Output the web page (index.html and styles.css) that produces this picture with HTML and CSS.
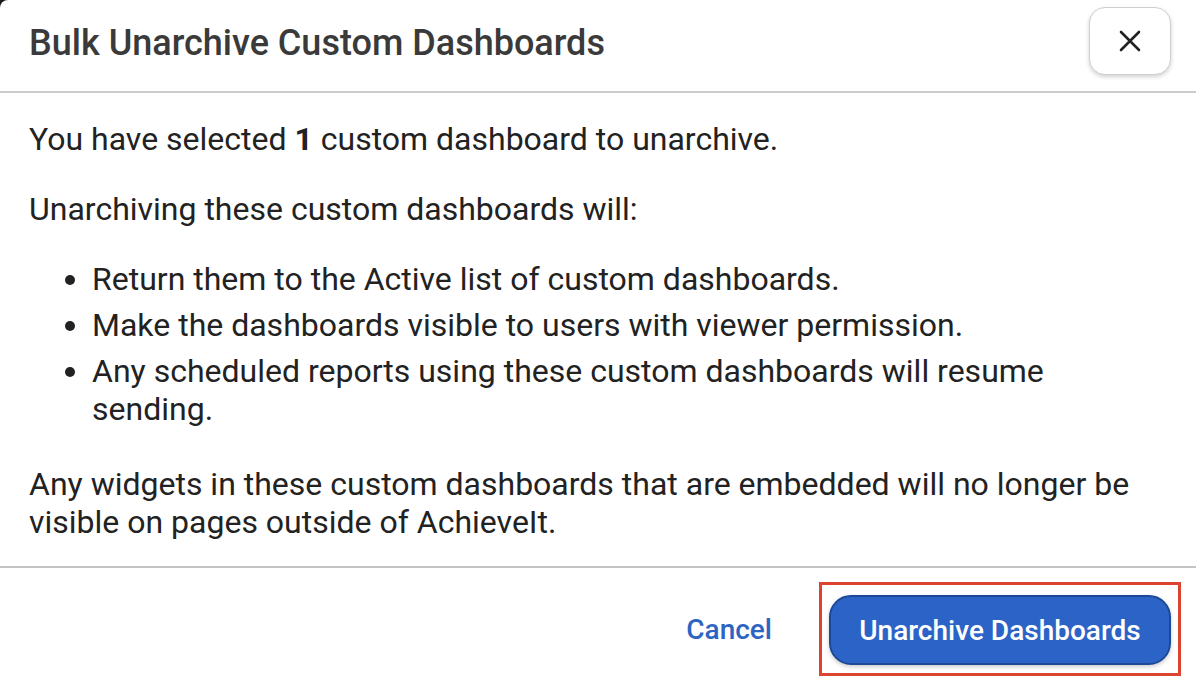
FILE: index.html
```html
<!DOCTYPE html>
<html lang="en">
<head>
<meta charset="utf-8">
<title>Bulk Unarchive Custom Dashboards</title>
<link rel="stylesheet" href="styles.css">
</head>
<body>
<div class="dialog">
  <header class="dialog-header">
    <h1 class="dialog-title">Bulk Unarchive Custom Dashboards</h1>
    <button class="close-btn" aria-label="Close">
      <svg width="22" height="22" viewBox="0 0 22 22" aria-hidden="true">
        <path d="M2 2 L20 20 M20 2 L2 20" stroke="#222" stroke-width="2.6" stroke-linecap="round" fill="none"/>
      </svg>
    </button>
  </header>
  <section class="dialog-body">
    <p class="para">You have selected <strong>1</strong> custom dashboard to unarchive.</p>
    <p class="para">Unarchiving these custom dashboards will:</p>
    <ul class="effects">
      <li>Return them to the Active list of custom dashboards.</li>
      <li>Make the dashboards visible to users with viewer permission.</li>
      <li>Any scheduled reports using these custom dashboards will resume sending.</li>
    </ul>
    <p class="para last">Any widgets in these custom dashboards that are embedded will no longer be visible on pages outside of AchieveIt.</p>
  </section>
  <footer class="dialog-footer">
    <button class="cancel-btn">Cancel</button>
    <div class="highlight">
      <button class="primary-btn">Unarchive Dashboards</button>
    </div>
  </footer>
</div>
</body>
</html>
```
FILE: styles.css
```css
html, body {
  margin: 0;
  padding: 0;
}
body {
  background: #1a1a1a;
  width: 1196px;
  height: 682px;
  overflow: hidden;
  font-family: Roboto, "Liberation Sans", Arial, sans-serif;
  color: #222;
}
.dialog {
  background: #fff;
  border-top-left-radius: 8px;
  width: 1196px;
  height: 682px;
}
.dialog-header {
  height: 91px;
  display: flex;
  align-items: center;
  justify-content: space-between;
  padding: 0 25px 0 29px;
  border-bottom: 2px solid #cbcbcb;
  box-sizing: content-box;
}
.dialog-title {
  margin: 0;
  font-size: 36px;
  font-weight: 500;
  color: #3a3a3a;
  padding-bottom: 6px;
}
.close-btn {
  width: 82px;
  height: 68px;
  border: 1.5px solid #cfcfcf;
  border-radius: 16px;
  background: #fff;
  box-shadow: 0 2px 4px rgba(0,0,0,0.18);
  display: flex;
  align-items: center;
  justify-content: center;
  padding: 0;
  margin-bottom: 10px;
}
.dialog-body {
  padding: 27px 29px 25px 29px;
  border-bottom: 2px solid #c4c4c4;
  font-size: 32px;
  line-height: 38px;
}
.para {
  margin: 0 0 32px 0;
}
.para.last {
  margin-bottom: 0;
}
.para strong {
  font-weight: 700;
}
.effects {
  margin: 0 0 37px 0;
  padding-left: 63px;
}
.effects li {
  margin-bottom: 8px;
}
.effects li:last-child {
  margin-bottom: 0;
}
.dialog-footer {
  display: flex;
  justify-content: flex-end;
  align-items: center;
  padding: 14px 15px 0 0;
  gap: 47px;
}
.cancel-btn {
  background: none;
  border: none;
  font-family: inherit;
  font-size: 28px;
  font-weight: 500;
  color: #2d64c4;
  padding: 0;
}
.highlight {
  border: 3px solid #dc4430;
  padding: 10px 7px 8px 7px;
}
.primary-btn {
  display: block;
  width: 342px;
  height: 70px;
  border-radius: 22px;
  background: #2c63c7;
  border: 2px solid #1d4a98;
  box-shadow: 0 2px 4px rgba(0,0,0,0.2);
  color: #fff;
  font-family: inherit;
  font-size: 28px;
  font-weight: 500;
  padding: 0;
}
```
